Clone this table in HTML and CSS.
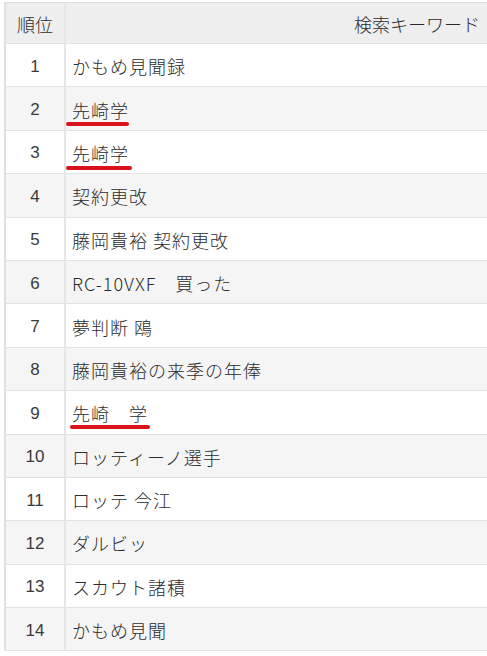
FILE: index.html
```html
<!DOCTYPE html>
<html lang="ja">
<head>
<meta charset="utf-8">
<link rel="stylesheet" href="styles.css">
</head>
<body>
<div class="wrap">
<table class="rank">
  <thead>
    <tr><th class="num">順位</th><th class="kw">検索キーワード</th></tr>
  </thead>
  <tbody>
    <tr><td class="num">1</td><td class="kw">かもめ見聞録</td></tr>
    <tr><td class="num">2</td><td class="kw"><span class="mark mark-a">先崎学</span></td></tr>
    <tr><td class="num">3</td><td class="kw"><span class="mark mark-b">先崎学</span></td></tr>
    <tr><td class="num">4</td><td class="kw">契約更改</td></tr>
    <tr><td class="num">5</td><td class="kw">藤岡貴裕 契約更改</td></tr>
    <tr><td class="num">6</td><td class="kw">RC-10VXF　買った</td></tr>
    <tr><td class="num">7</td><td class="kw">夢判断 鴎</td></tr>
    <tr><td class="num">8</td><td class="kw">藤岡貴裕の来季の年俸</td></tr>
    <tr><td class="num">9</td><td class="kw"><span class="mark mark-c">先崎　学</span></td></tr>
    <tr><td class="num">10</td><td class="kw">ロッティーノ選手</td></tr>
    <tr><td class="num">11</td><td class="kw">ロッテ 今江</td></tr>
    <tr><td class="num">12</td><td class="kw">ダルビッ</td></tr>
    <tr><td class="num">13</td><td class="kw">スカウト諸積</td></tr>
    <tr><td class="num">14</td><td class="kw">かもめ見聞</td></tr>
  </tbody>
</table>
</div>
</body>
</html>
```

FILE: styles.css
```css
html, body {
  margin: 0;
  padding: 0;
  background: #ffffff;
  overflow: hidden;
}

.wrap {
  padding: 2px 0 0 4px;
}

.rank {
  width: 483px;
  border-collapse: separate;
  border-spacing: 0;
  font-family: "Noto Sans CJK JP", "Noto Sans", sans-serif;
  font-size: 18px;
  font-weight: 300;
  color: #2b2b2b;
  border-top: 1px solid #dcdcdc;
}

.rank th,
.rank td {
  box-sizing: border-box;
  font-weight: 300;
  border-bottom: 1px solid #e2e2e2;
  padding: 2px 6px 0;
  line-height: 1;
  vertical-align: middle;
}

.rank th {
  height: 41px;
  background: #eeeeee;
  border-bottom-color: #e4e4e4;
}

.rank td {
  height: 43.4px;
}

.rank tbody tr:nth-child(even) td {
  background: #f5f5f5;
}

.rank .num {
  width: 62px;
  text-align: center;
  border-left: 2px solid #e0e0e0;
  border-right: 2px solid #e6e6e6;
  padding: 2px 0 0;
}

.rank td.num {
  font-family: "Liberation Sans", sans-serif;
  font-size: 17px;
  font-weight: normal;
  color: #3a3a3a;
}

.rank th.kw {
  text-align: right;
  padding-right: 7px;
}

.rank td.kw {
  text-align: left;
  letter-spacing: 1px;
}

.mark {
  position: relative;
  display: inline-block;
}

.mark::after {
  content: "";
  position: absolute;
  height: 4px;
  border-radius: 2px;
  background: #d8131c;
}

.mark-a::after {
  left: -6px;
  right: 0;
  bottom: -7px;
}

.mark-b::after {
  left: -6px;
  right: -3px;
  bottom: -8px;
}

.mark-c::after {
  left: -2px;
  right: -2px;
  bottom: -7px;
}
```
